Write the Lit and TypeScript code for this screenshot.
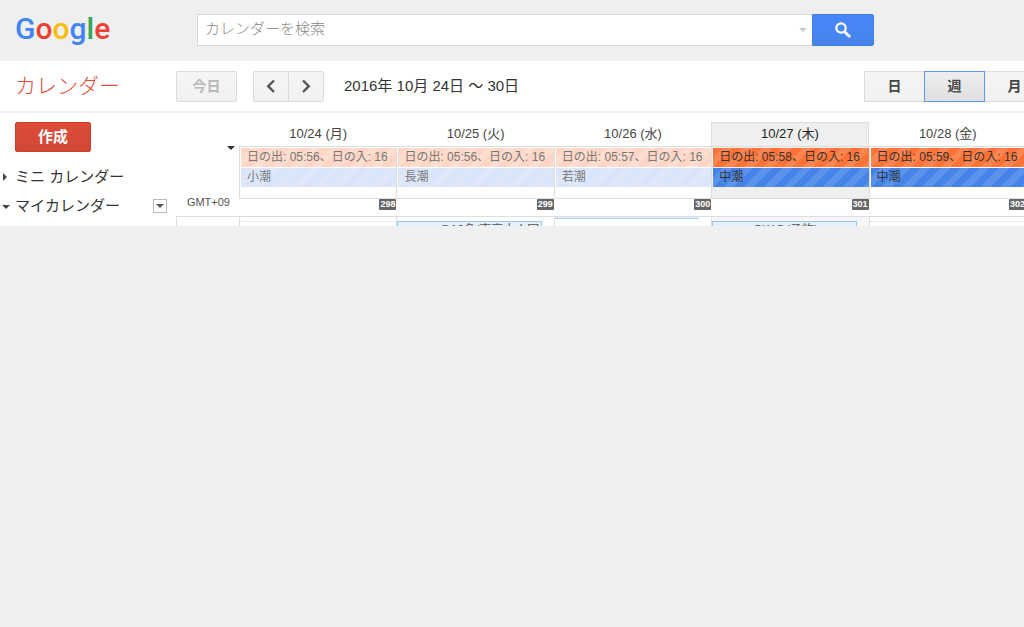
import { LitElement, html, css, nothing } from "lit";
import { customElement, state } from "lit/decorators.js";
import { classMap } from "lit/directives/class-map.js";

interface Day {
  label: string;
  sun: string;
  tide: string;
  count: number;
  past?: boolean;
  today?: boolean;
  event?: string;
  eventEnd?: boolean;
}

const DAYS: Day[] = [
  { label: "10/24 (月)", sun: "日の出: 05:56、日の入: 16", tide: "小潮", count: 298, past: true },
  { label: "10/25 (火)", sun: "日の出: 05:56、日の入: 16", tide: "長潮", count: 299, past: true, event: "@12名/東京大人国" },
  { label: "10/26 (水)", sun: "日の出: 05:57、日の入: 16", tide: "若潮", count: 300, past: true, eventEnd: true },
  { label: "10/27 (木)", sun: "日の出: 05:58、日の入: 16", tide: "中潮", count: 301, today: true, event: "GW@(予約)" },
  { label: "10/28 (金)", sun: "日の出: 05:59、日の入: 16", tide: "中潮", count: 302 },
];

@customElement("app-root")
export class AppRoot extends LitElement {
  @state() private view = "週";

  static styles = css`
    :host {
      display: block;
      min-height: 100vh;
      overflow: hidden;
      background: #f0f0f0;
      color: #444;
      font-family: "Liberation Sans", "Noto Sans CJK JP", sans-serif;
      font-size: 13px;
    }
    * { box-sizing: border-box; }
    button, input { font: inherit; color: inherit; margin: 0; padding: 0; }
    button { cursor: pointer; }
    h1, h2 { margin: 0; font-weight: 400; }
    svg { display: block; }

    .header {
      display: flex;
      height: 61px;
      padding: 14px 15px 0;
      background: #efefef;
    }
    .logo { flex: none; width: 182px; }
    .logo svg { overflow: visible; }
    .logo text { font-family: Roboto, sans-serif; font-size: 30px; font-weight: 500; }
    .b { fill: #4285f4; }
    .r { fill: #ea4335; }
    .y { fill: #fbbc05; }
    .g { fill: #34a853; }
    .search { display: flex; flex: 0 1 677px; height: 32px; }
    .field {
      display: flex;
      flex: 1;
      background: #fff;
      border: 1px solid #d9d9d9;
      border-right: 0;
    }
    .field input {
      flex: 1;
      min-width: 0;
      padding: 0 0 4px 7px;
      border: 0;
      outline: 0;
      background: none;
      font-size: 15px;
      font-weight: 300;
    }
    .field input::placeholder { color: #888; opacity: 1; }
    .options { width: 18px; border: 0; background: none; color: #ccc; display: grid; place-items: center; }
    .go {
      display: grid;
      place-items: center;
      width: 62px;
      border: 1px solid #3f7fec;
      border-radius: 0 2px 2px 0;
      background: linear-gradient(#4787fb, #4683ea);
    }

    .toolbar {
      display: flex;
      align-items: center;
      height: 52px;
      padding-left: 15px;
      background: #fff;
      border-bottom: 2px solid #f0f0f0;
    }
    .title { flex: none; width: 161px; color: #dd4b39; font-size: 21px; font-weight: 300; line-height: 30px; }
    .btn {
      display: grid;
      place-items: center;
      height: 31px;
      border: 1px solid #dcdcdc;
      background: linear-gradient(#f5f5f5, #f1f1f1);
      font-weight: 700;
      line-height: 20px;
    }
    .now { width: 61px; border-radius: 2px; color: #b8b8b8; font-size: 14px; }
    .nav { display: flex; margin: 0 20px 0 16px; }
    .nav .btn { width: 36px; border-radius: 2px 0 0 2px; }
    .nav .btn + .btn { margin-left: -1px; border-radius: 0 2px 2px 0; }
    .range { flex: 1; white-space: nowrap; font-size: 15px; line-height: 20px; color: #333; }
    .views { display: flex; flex: none; margin-right: -21px; }
    .views .btn { width: 61px; margin-left: -1px; font-size: 14px; }
    .views .btn.on {
      z-index: 1;
      border: 1px solid #5c97fb;
      outline: 0;
      background: linear-gradient(#eee, #e0e0e0) padding-box;
    }

    .body { display: flex; height: 113px; background: #fff; overflow: hidden; }
    .side { flex: none; width: 176px; padding-top: 9px; }
    .create {
      display: block;
      width: 76px;
      height: 30px;
      margin: 0 0 10px 15px;
      border: 1px solid #c8402f;
      border-radius: 2px;
      background: linear-gradient(#dd4b39, #d14836);
      color: #fff;
      font-size: 15px;
      font-weight: 700;
      line-height: 26px;
    }
    .row { display: flex; align-items: center; height: 29px; padding-right: 9px; }
    .fold { display: flex; flex: 1; align-items: center; padding: 0; border: 0; background: none; font-size: 15px; line-height: 20px; color: #333; }
    .fold svg { flex: none; width: 15px; }
    .menu { display: grid; place-items: center; width: 14px; height: 14px; border: 1px solid #bbb; background: #fff; color: #555; }

    .gutter { display: flex; flex: none; flex-direction: column; align-items: flex-end; width: 63px; padding-top: 32px; }
    .expand { display: grid; place-items: center; padding: 0; width: 12px; height: 5px; border: 0; background: none; color: #333; margin-right: 2px; }
    .zone { flex: 1; padding: 45px 9px 0 0; font-size: 11px; line-height: 14px; color: #555; }
    .hours { width: 100%; height: 10px; border: 1px solid #ddd; border-width: 1px 0 0 1px; }

    .week { display: grid; grid-template-columns: repeat(5, minmax(0, 1fr)); flex: 1; margin-right: -2px; padding-top: 9px; }
    .day { display: flex; flex-direction: column; min-width: 0; }
    .head { height: 24px; border-left: 1px solid transparent; font-size: 13px; line-height: 24px; text-align: center; }
    .allday { height: 53px; padding: 1px 0 0 1px; border: 1px solid #ddd; border-width: 1px 0 1px 1px; }
    .bar {
      height: 19px;
      margin-bottom: 1px;
      padding: 0 3px 0 6px;
      overflow: hidden;
      white-space: nowrap;
      font-size: 12px;
      line-height: 18px;
      color: #333;
    }
    .sun { background: repeating-linear-gradient(135deg, #ff7436 0 7px, #ff8550 7px 14px); }
    .tide { background: repeating-linear-gradient(135deg, #4583e7 0 7px, #5a92ec 7px 14px); }
    .past .bar { color: #777; }
    .past .sun { background: repeating-linear-gradient(135deg, #ffd5c5 0 7px, #ffddcf 7px 14px); }
    .past .tide { background: repeating-linear-gradient(135deg, #d9e5fa 0 7px, #dfe8fb 7px 14px); }
    .countrow { display: flex; justify-content: flex-end; height: 17px; }
    .count {
      width: 17px;
      height: 11px;
      border-radius: 1px;
      background: #666;
      color: #fff;
      font-size: 9px;
      font-weight: 700;
      line-height: 11px;
      text-align: center;
    }
    .slot { height: 10px; border: 1px solid #ddd; border-width: 1px 0 0 1px; overflow: hidden; }
    .half { height: 5px; border-bottom: 1px dotted #ddd; }
    .tail { height: 2px; margin: 0 12px 3px 0; border-bottom: 1px solid #a9cdef; background: #e3effa; }
    .event {
      height: 20px;
      margin: 4px 12px 0 0;
      padding-left: 40px;
      border: 1px solid #9cc6ee;
      background: #e3effa;
      color: #555;
      font-size: 12px;
      line-height: 16px;
      overflow: hidden;
      white-space: nowrap;
    }
    .today .head { border: 1px solid #ddd; border-width: 1px 1px 0 1px; background: #efefef; color: #222; line-height: 22px; }
    .today .allday { background: #efefef; }
    .today .slot { background: #f6f6f6; }
  `;

  private down(width = 8) {
    return html`<svg width=${width} height=${width / 2} viewBox="0 0 8 4" aria-hidden="true"><path d="M0 0h8L4 4z" fill="currentColor"/></svg>`;
  }

  private renderDay(d: Day) {
    return html`
      <section class=${classMap({ day: true, past: !!d.past, today: !!d.today })}>
        <div class="head">${d.label}</div>
        <div class="allday">
          <div class="bar sun">${d.sun}</div>
          <div class="bar tide">${d.tide}</div>
        </div>
        <div class="countrow"><span class="count">${d.count}</span></div>
        <div class="slot">
          ${d.event ? html`<div class="event">${d.event}</div>` : nothing}
          ${d.eventEnd ? html`<div class="tail"></div>` : nothing}
          ${!d.event && !d.eventEnd ? html`<div class="half"></div>` : nothing}
        </div>
      </section>`;
  }

  render() {
    return html`
      <header class="header">
        <a class="logo" href="#" aria-label="Google">
          <svg width="100" height="40" viewBox="0 0 100 40">
            <text x="0" y="25"><tspan class="b">G</tspan><tspan class="r">o</tspan><tspan class="y">o</tspan><tspan class="b">g</tspan><tspan class="g">l</tspan><tspan class="r">e</tspan></text>
          </svg>
        </a>
        <form class="search" role="search" @submit=${(e: Event) => e.preventDefault()}>
          <div class="field">
            <input type="text" aria-label="カレンダーを検索" placeholder="カレンダーを検索" />
            <button class="options" type="button" aria-label="検索オプション">${this.down()}</button>
          </div>
          <button class="go" aria-label="検索">
            <svg width="18" height="18" viewBox="0 0 18 18" fill="none" stroke="#fff">
              <circle cx="7" cy="7" r="4.7" stroke-width="2.2"/>
              <path d="M10.4 10.4L16 16" stroke-width="2.8"/>
            </svg>
          </button>
        </form>
      </header>

      <div class="toolbar">
        <h1 class="title">カレンダー</h1>
        <button class="btn now" disabled>今日</button>
        <div class="nav">
          <button class="btn" aria-label="前の週">
            <svg width="12" height="14" viewBox="0 0 12 14" fill="none" stroke="#555" stroke-width="2.4"><path d="M9 1.5L3.2 7.2L9 13"/></svg>
          </button>
          <button class="btn" aria-label="次の週">
            <svg width="12" height="14" viewBox="0 0 12 14" fill="none" stroke="#555" stroke-width="2.4"><path d="M3 1.5L8.8 7.2L3 13"/></svg>
          </button>
        </div>
        <h2 class="range">2016年 10月 24日 ～ 30日</h2>
        <div class="views">
          ${["日", "週", "月"].map(
            (v) => html`<button class=${classMap({ btn: true, on: v === this.view })} @click=${() => (this.view = v)}>${v}</button>`
          )}
        </div>
      </div>

      <div class="body">
        <nav class="side">
          <button class="create">作成</button>
          <div class="row">
            <button class="fold">
              <svg height="8" viewBox="0 0 15 8" aria-hidden="true"><path d="M3 0l4 4l-4 4z" fill="#444"/></svg>ミニ カレンダー
            </button>
          </div>
          <div class="row">
            <button class="fold">
              <svg height="8" viewBox="0 0 15 8" aria-hidden="true"><path d="M2 3h8l-4 4z" fill="#444"/></svg>マイカレンダー
            </button>
            <button class="menu" aria-label="マイカレンダーのメニュー">${this.down()}</button>
          </div>
        </nav>
        <div class="gutter">
          <button class="expand" aria-label="終日の予定を折りたたむ">${this.down()}</button>
          <div class="zone">GMT+09</div>
          <div class="hours"></div>
        </div>
        <main class="week">${DAYS.map((d) => this.renderDay(d))}</main>
      </div>
    `;
  }
}
